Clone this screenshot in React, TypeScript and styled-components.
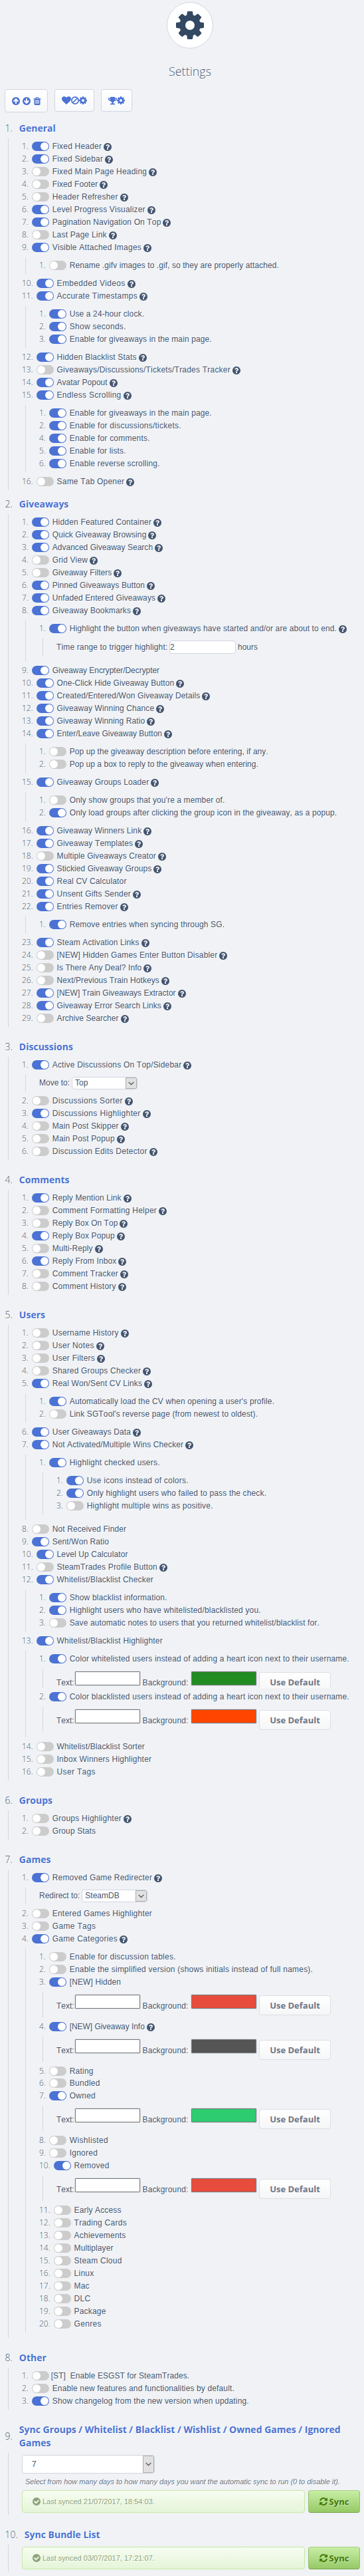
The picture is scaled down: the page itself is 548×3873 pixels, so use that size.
import React from "react";
import styled, { createGlobalStyle, css } from "styled-components";
import { FaTrophy } from "react-icons/fa";

const GlobalStyle = createGlobalStyle`
  body {
    margin: 0;
    background: #f0f2f5;
    color: #465670;
    font: 12px/14px "Liberation Sans", Arial, sans-serif;
    text-shadow: 1px 1px rgba(255, 255, 255, 0.94);
  }
  * { box-sizing: border-box; }
`;

const DISC =
  "M1664 896q0 209-103 385.500t-279.500 279.500-385.500 103-385.500-103-279.500-279.500-103-385.500 103-385.500 279.500-279.500 385.500-103 385.500 103 279.500 279.500 103 385.500z";
const PATHS = {
  cog: "M1152 896q0-106-75-181t-181-75-181 75-75 181 75 181 181 75 181-75 75-181zm512-109v222q0 12-8 23t-20 13l-185 28q-19 54-39 91 35 50 107 138 10 12 10 25t-9 23q-27 37-99 108t-94 71q-12 0-26-9l-138-108q-44 23-91 38-16 136-29 186-7 28-36 28h-222q-14 0-24.500-8.500t-11.500-21.500l-28-184q-49-16-90-37l-141 107q-10 9-25 9-14 0-25-11-126-114-165-168-7-10-7-23 0-12 8-23 15-21 51-66.500t54-70.500q-27-50-41-99l-183-27q-13-2-21-12.500t-8-23.500v-222q0-12 8-23t19-13l186-28q14-46 39-92-40-57-107-138-10-12-10-24 0-10 9-23 26-36 98.500-107.500t94.500-71.500q13 0 26 10l138 107q44-23 91-38 16-136 29-186 7-28 36-28h222q14 0 24.500 8.500t11.500 21.500l28 184q49 16 90 37l142-107q9-9 24-9 13 0 25 10 129 119 165 170 7 8 7 22 0 12-8 23-15 21-51 66.500t-54 70.500q26 50 41 98l183 28q13 2 21 12.500t8 23.500z",
  help: "M1024 1376v-192q0-14-9-23t-23-9h-192q-14 0-23 9t-9 23v192q0 14 9 23t23 9h192q14 0 23-9t9-23zm256-672q0-88-55.500-163t-138.500-116-170-41q-243 0-371 213-15 24 8 42l132 100q7 6 19 6 16 0 25-12 53-68 86-92 34-24 86-24 48 0 85.500 26t37.500 59q0 38-20 61t-68 45q-63 28-115.500 86.500t-52.500 125.500v36q0 14 9 23t23 9h192q14 0 23-9t9-23q0-19 21.500-49.500t54.500-49.500q32-18 49-28.500t46-35 44.500-48 28-60.500 12.500-81z" + DISC,
  up: "M1412 895q0-27-18-45l-362-362-91-91q-18-18-45-18t-45 18l-91 91-362 362q-18 18-18 45t18 45l91 91q18 18 45 18t45-18l189-189v502q0 26 19 45t45 19h128q26 0 45-19t19-45v-502l189 189q19 19 45 19t45-19l91-91q18-18 18-45z" + DISC,
  trash: "M704 1376v-704q0-14-9-23t-23-9h-64q-14 0-23 9t-9 23v704q0 14 9 23t23 9h64q14 0 23-9t9-23zm256 0v-704q0-14-9-23t-23-9h-64q-14 0-23 9t-9 23v704q0 14 9 23t23 9h64q14 0 23-9t9-23zm256 0v-704q0-14-9-23t-23-9h-64q-14 0-23 9t-9 23v704q0 14 9 23t23 9h64q14 0 23-9t9-23zm-544-992h448l-48-117q-7-9-17-11h-317q-10 2-17 11zm928 32v64q0 14-9 23t-23 9h-96v948q0 83-47 143.500t-113 60.500h-832q-66 0-113-58.500t-47-141.500v-952h-96q-14 0-23-9t-9-23v-64q0-14 9-23t23-9h309l70-167q15-37 54-63t79-26h320q40 0 79 26t54 63l70 167h309q14 0 23 9t9 23z",
  heart: "M896 1664q-26 0-44-18l-624-602q-10-8-27.500-26t-55.500-65.500-68-97.500-53.500-121-23.500-138q0-220 127-344t351-124q62 0 126.500 21.500t120 58 95.500 68.500 76 68q36-36 76-68t95.500-68.500 120-58 126.500-21.500q224 0 351 124t127 344q0 221-229 450l-623 600q-18 18-44 18z",
  refresh: "M1639 1056q0 5-1 7-64 268-268 434.500t-478 166.500q-146 0-282.500-55t-243.500-157l-129 129q-19 19-45 19t-45-19-19-45v-448q0-26 19-45t45-19h448q26 0 45 19t19 45-19 45l-137 137q71 66 161 102t187 36q134 0 250-65t186-179q11-17 53-117 8-23 30-23h192q13 0 22.500 9.500t9.500 22.500zm25-800v448q0 26-19 45t-45 19h-448q-26 0-45-19t-19-45 19-45l138-138q-148-137-349-137-134 0-250 65t-186 179q-11 17-53 117-8 23-30 23h-199q-13 0-22.500-9.500t-9.500-22.500v-7q65-268 270-434.500t480-166.500q146 0 284 55.500t245 156.500l130-129q19-19 45-19t45 19 19 45z",
  check: "M1412 734q0-28-18-46l-91-90q-19-19-45-19t-45 19l-408 407-226-226q-19-19-45-19t-45 19l-91 90q-18 18-18 46 0 27 18 45l362 362q19 19 45 19 27 0 46-19l543-543q18-18 18-45z" + DISC,
};

const Svg = styled.svg<{ $size: number; $flip?: boolean }>`
  display: block;
  flex: none;
  width: ${(p) => p.$size}px;
  height: ${(p) => p.$size}px;
  fill: currentColor;
  fill-rule: evenodd;
  ${(p) => p.$flip && css`transform: rotate(180deg);`}
`;

const Icon = ({ name, size = 12, flip, full }: { name: keyof typeof PATHS; size?: number; flip?: boolean; full?: boolean }) => (
  <Svg $size={size} $flip={flip} viewBox={full ? "0 0 1792 1792" : "128 128 1536 1536"}>
    <path d={PATHS[name]} />
  </Svg>
);

const BanIcon = () => (
  <Svg $size={12} viewBox="0 0 12 12">
    <circle cx="6" cy="6" r="5.1" fill="none" stroke="currentColor" strokeWidth="1.7" />
    <path d="M9.5 2.500L2.500 9.500" stroke="currentColor" strokeWidth="1.700" />
  </Svg>
);

const Page = styled.main`
  width: 548px;
  height: 3873px;
  padding: 3px 0 0 7px;
  overflow: hidden;
`;

const Header = styled.header`
  display: flex;
  flex-direction: column;
  align-items: center;
  padding-left: 17px;
`;

const Badge = styled.div`
  display: flex;
  align-items: center;
  justify-content: center;
  width: 70px;
  height: 70px;
  border: 1px solid #d2d6e0;
  border-radius: 50%;
  background: #fff;
  color: #334862;
`;

const Title = styled.h1`
  margin: 22px 0 15px;
  color: #4d5d74;
  font: 300 18px/24px "Open Sans", sans-serif;
`;

const Toolbar = styled.div`
  display: flex;
  align-items: flex-start;
  gap: 10px;
  height: 35px;
  margin-bottom: 14px;
`;

const ToolButton = styled.button<{ $width: number; $tall?: boolean }>`
  display: flex;
  align-items: center;
  justify-content: center;
  gap: ${(p) => (p.$tall ? "4px" : "0")};
  width: ${(p) => p.$width}px;
  height: ${(p) => (p.$tall ? 35 : 34)}px;
  padding: 0;
  border: 1px solid #d2d6e0;
  border-radius: 4px;
  background: linear-gradient(#fff, #f7f8fa);
  color: #4b72d4;
`;

const Section = styled.section<{ $gap: number }>`
  margin-top: ${(p) => p.$gap}px;
`;

const Heading = styled.div`
  display: flex;
  align-items: center;
  gap: 10px;
  margin-bottom: 5px;
  padding-left: 0.5px;
  color: #4d5d74;
  font: 300 14px/20px "Open Sans", sans-serif;
`;

const HeadingText = styled.h2`
  flex: 1;
  margin: 0;
  color: #4b72d4;
  font-size: 14px;
  font-weight: 700;
`;

const Group = styled.div<{ $nested?: boolean }>`
  margin: ${(p) => (p.$nested ? "8px 0 7px 5px" : "0 0 0 5px")};
  padding: 5px 0 1px 20px;
  border-left: 1px solid #d2d6e0;
`;

const Panel = styled.div<{ $height: number; $cut?: boolean }>`
  display: flex;
  align-items: flex-start;
  height: ${(p) => p.$height}px;
  margin: ${(p) => (p.$cut ? "8px 0 6px 5px" : "8px 0 7px 5px")};
  padding: 3px 0 0 20px;
  border-left: 1px solid #d2d6e0;
  white-space: pre;
  overflow: hidden;
`;

const Row = styled.div<{ $tight?: boolean }>`
  display: flex;
  align-items: center;
  height: 14px;
  margin-bottom: ${(p) => (p.$tight ? 4 : 5)}px;
  white-space: nowrap;
`;

const Num = styled.span`
  margin-right: 5px;
  color: #465670;
  font: 300 12px/14px "Open Sans", sans-serif;
`;

const Track = styled.span<{ $on: boolean }>`
  display: flex;
  flex: none;
  justify-content: ${(p) => (p.$on ? "flex-end" : "flex-start")};
  width: 26px;
  height: 14px;
  padding: 1px;
  border-radius: 7px;
  background: ${(p) => (p.$on ? "#4b72d4" : "#ccc")};
`;

const Knob = styled.span`
  width: 12px;
  height: 12px;
  border-radius: 50%;
  background: #fff;
`;

const Label = styled.span<{ $close?: boolean }>`
  margin: 0 3px 0 ${(p) => (p.$close ? 3 : 5)}px;
  font-kerning: none;
  white-space: pre;
`;

const HelpWrap = styled.span`
  padding-top: 2px;
`;

const Caption = styled.span<{ $top: number; $width?: number }>`
  flex: none;
  width: ${(p) => (p.$width ? p.$width + "px" : "auto")};
  margin-top: ${(p) => p.$top}px;
  font-kerning: none;
`;

const NumberBox = styled.span`
  width: 100px;
  height: 20px;
  margin: 0 3px;
  border: 1px solid #d2d6e0;
  border-radius: 4px;
  background: #fff;
  line-height: 18px;
`;

const Select = styled.span<{ $big?: boolean }>`
  display: flex;
  justify-content: space-between;
  width: ${(p) => (p.$big ? 200 : 99)}px;
  height: ${(p) => (p.$big ? 28 : 19)}px;
  margin-left: ${(p) => (p.$big ? 0 : 3)}px;
  padding-left: ${(p) => (p.$big ? 14 : 4)}px;
  border: 1px solid #d2d6e0;
  border-radius: 4px;
  background: #fff;
  line-height: ${(p) => (p.$big ? 26 : 17)}px;
  overflow: hidden;
`;

const Arrow = styled.span`
  display: flex;
  align-items: center;
  justify-content: center;
  width: 17px;
  border: 1px solid #adadad;
  background: #e1e1e1;
`;

const Swatch = styled.span<{ $color: string }>`
  flex: none;
  width: 98px;
  height: 21px;
  margin-top: 1px;
  border: 1px solid #7a7a7a;
  border-radius: 1px;
  background: ${(p) => p.$color};
  box-shadow: 0 0 0 0.5px #c8cedb;
`;

const DefaultButton = styled.button`
  flex: none;
  width: 108px;
  height: 30px;
  margin: 2px 0 0 4px;
  padding: 0;
  border: 1px solid #dcdfe4;
  border-radius: 4px;
  background: linear-gradient(#fff, #f5f6f7);
  color: #6f7687;
  font: 700 13px/28px "Open Sans", sans-serif;
`;

const SyncPanel = styled.div`
  margin-left: 5px;
  padding: 3px 0 3px 20px;
  border-left: 1px solid #d2d6e0;
`;

const Description = styled.p`
  margin: 6px 0 7px 5px;
  color: #6b7a8c;
  font: italic 11px/12px "Liberation Sans", Arial, sans-serif;
  letter-spacing: -0.045px;
  white-space: nowrap;
`;

const SyncRow = styled.div`
  display: flex;
  gap: 5px;
`;

const Status = styled.div`
  display: flex;
  align-items: center;
  gap: 3px;
  width: 426px;
  height: 34px;
  padding: 0 0 1px 15px;
  border: 1px solid #c5e8a5;
  border-radius: 4px;
  background: linear-gradient(#f7fcf1, #e4f5d8);
  color: #8da37e;
  font-size: 11px;
`;

const SyncButton = styled.button`
  display: flex;
  align-items: center;
  justify-content: center;
  gap: 3px;
  width: 78px;
  height: 34px;
  padding: 0;
  border: 1px solid;
  border-color: #a8ce84 #96be70 #76a34c;
  border-radius: 4px;
  background: linear-gradient(#c8eea5, #96c966);
  color: #437808;
  font: 700 13px/18px "Open Sans", sans-serif;
  text-shadow: 1px 1px 1px rgba(255, 255, 255, 0.4);
`;

/* Difference between whole-pixel and fractional glyph advances at 12px. */
const advanceDelta = (char: string) => {
  if ("abdeghnopquilwCDHLNRU".includes(char)) return 0.33;
  if ("tf ./,:[]()".includes(char)) return -0.33;
  if ("sm".includes(char)) return 1;
  if ("vyz".includes(char)) return -1;
  return 0;
};

const tracking = (text: string) => ({
  letterSpacing: `${([...text].reduce((sum, char) => sum + advanceDelta(char), 0) / text.length).toFixed(3)}px`,
});

type Extra =
  | { kind: "list"; items: Item[] }
  | { kind: "hours" }
  | { kind: "select"; caption: string; value: string }
  | { kind: "colors"; background: string; cut?: boolean };

type Item = { n: number; on: boolean; text: string; help: boolean; extra?: Extra; tight?: boolean; close?: boolean };

/* Flags: "+" switched on, "-" switched off, "?" followed by a help icon. */
const it = (n: number, flags: string, text: string, extra?: Extra): Item => ({
  n,
  on: flags[0] === "+",
  help: flags.includes("?"),
  text,
  extra,
});
const list = (...items: Item[]): Extra => ({ kind: "list", items });
const colors = (background: string, cut?: boolean): Extra => ({ kind: "colors", background, cut });

const general: Item[] = [
  it(1, "+?", "Fixed Header"),
  it(2, "+?", "Fixed Sidebar"),
  it(3, "-?", "Fixed Main Page Heading"),
  it(4, "-?", "Fixed Footer"),
  it(5, "-?", "Header Refresher"),
  it(6, "+?", "Level Progress Visualizer"),
  it(7, "+?", "Pagination Navigation On Top"),
  it(8, "-?", "Last Page Link"),
  it(9, "+?", "Visible Attached Images", list(it(1, "-", "Rename .gifv images to .gif, so they are properly attached."))),
  it(10, "+?", "Embedded Videos"),
  it(11, "+?", "Accurate Timestamps", list(
    it(1, "+", "Use a 24-hour clock."),
    it(2, "+", "Show seconds."),
    it(3, "+", "Enable for giveaways in the main page."),
  )),
  it(12, "+?", "Hidden Blacklist Stats"),
  it(13, "-?", "Giveaways/Discussions/Tickets/Trades Tracker"),
  it(14, "+?", "Avatar Popout"),
  it(15, "+?", "Endless Scrolling", list(
    it(1, "+", "Enable for giveaways in the main page."),
    it(2, "+", "Enable for discussions/tickets."),
    it(4, "+", "Enable for comments."),
    it(5, "+", "Enable for lists."),
    it(6, "+", "Enable reverse scrolling."),
  )),
  it(16, "-?", "Same Tab Opener"),
];

const giveaways: Item[] = [
  it(1, "+?", "Hidden Featured Container"),
  it(2, "+?", "Quick Giveaway Browsing"),
  it(3, "+?", "Advanced Giveaway Search"),
  it(4, "-?", "Grid View"),
  it(5, "-?", "Giveaway Filters"),
  it(6, "+?", "Pinned Giveaways Button"),
  it(7, "+?", "Unfaded Entered Giveaways"),
  it(8, "+?", "Giveaway Bookmarks", list(
    it(1, "+?", "Highlight the button when giveaways have started and/or are about to end.", { kind: "hours" }),
  )),
  it(9, "+", "Giveaway Encrypter/Decrypter"),
  it(10, "+?", "One-Click Hide Giveaway Button"),
  it(11, "+?", "Created/Entered/Won Giveaway Details"),
  it(12, "+?", "Giveaway Winning Chance"),
  it(13, "+?", "Giveaway Winning Ratio"),
  it(14, "+?", "Enter/Leave Giveaway Button", list(
    it(1, "-", "Pop up the giveaway description before entering, if any."),
    it(2, "-", "Pop up a box to reply to the giveaway when entering."),
  )),
  it(15, "+?", "Giveaway Groups Loader", list(
    it(1, "-", "Only show groups that you're a member of."),
    it(2, "+", "Only load groups after clicking the group icon in the giveaway, as a popup."),
  )),
  it(16, "+?", "Giveaway Winners Link"),
  it(17, "+?", "Giveaway Templates"),
  it(18, "-?", "Multiple Giveaways Creator"),
  it(19, "+?", "Stickied Giveaway Groups"),
  it(20, "+", "Real CV Calculator"),
  it(21, "+?", "Unsent Gifts Sender"),
  it(22, "+?", "Entries Remover", list(it(1, "+", "Remove entries when syncing through SG."))),
  it(23, "+?", "Steam Activation Links"),
  it(24, "-?", "[NEW] Hidden Games Enter Button Disabler"),
  it(25, "-?", "Is There Any Deal? Info"),
  it(26, "-?", "Next/Previous Train Hotkeys"),
  it(27, "+?", "[NEW] Train Giveaways Extractor"),
  it(28, "+?", "Giveaway Error Search Links"),
  it(29, "-?", "Archive Searcher"),
];

const discussions: Item[] = [
  it(1, "+?", "Active Discussions On Top/Sidebar", { kind: "select", caption: "Move to:", value: "Top" }),
  it(2, "-?", "Discussions Sorter"),
  it(3, "+?", "Discussions Highlighter"),
  it(4, "-?", "Main Post Skipper"),
  it(5, "-?", "Main Post Popup"),
  it(6, "-?", "Discussion Edits Detector"),
];

const comments: Item[] = [
  it(1, "+?", "Reply Mention Link"),
  it(2, "-?", "Comment Formatting Helper"),
  it(3, "-?", "Reply Box On Top"),
  it(4, "+?", "Reply Box Popup"),
  it(5, "-?", "Multi-Reply"),
  it(6, "+?", "Reply From Inbox"),
  it(7, "-?", "Comment Tracker"),
  it(8, "-?", "Comment History"),
];

const users: Item[] = [
  it(1, "-?", "Username History"),
  it(2, "-?", "User Notes"),
  it(3, "-?", "User Filters"),
  it(4, "-?", "Shared Groups Checker"),
  it(5, "+?", "Real Won/Sent CV Links", list(
    it(1, "+", "Automatically load the CV when opening a user's profile."),
    it(2, "-", "Link SGTool's reverse page (from newest to oldest)."),
  )),
  it(6, "+?", "User Giveaways Data"),
  it(7, "+?", "Not Activated/Multiple Wins Checker", list(
    it(1, "+", "Highlight checked users.", list(
      it(1, "+", "Use icons instead of colors."),
      it(2, "+", "Only highlight users who failed to pass the check."),
      it(3, "-", "Highlight multiple wins as positive."),
    )),
  )),
  it(8, "-", "Not Received Finder"),
  it(9, "+", "Sent/Won Ratio"),
  it(10, "+", "Level Up Calculator"),
  it(11, "-?", "SteamTrades Profile Button"),
  it(12, "+", "Whitelist/Blacklist Checker", list(
    it(1, "+", "Show blacklist information."),
    it(2, "+", "Highlight users who have whitelisted/blacklisted you."),
    it(3, "-", "Save automatic notes to users that you returned whitelist/blacklist for."),
  )),
  it(13, "+", "Whitelist/Blacklist Highlighter", list(
    it(1, "+", "Color whitelisted users instead of adding a heart icon next to their username.", colors("#228b22", true)),
    it(2, "+", "Color blacklisted users instead of adding a heart icon next to their username.", colors("#ff4500")),
  )),
  it(14, "-", "Whitelist/Blacklist Sorter"),
  it(15, "-", "Inbox Winners Highlighter"),
  it(16, "-", "User Tags"),
];

const groups: Item[] = [it(1, "-?", "Groups Highlighter"), it(2, "-", "Group Stats")];

const games: Item[] = [
  it(1, "+?", "Removed Game Redirecter", { kind: "select", caption: "Redirect to:", value: "SteamDB" }),
  it(2, "-", "Entered Games Highlighter"),
  it(3, "-", "Game Tags"),
  it(4, "+?", "Game Categories", list(
    it(1, "-", "Enable for discussion tables."),
    it(2, "-", "Enable the simplified version (shows initials instead of full names)."),
    it(3, "+", "[NEW] Hidden", colors("#e74c3c")),
    it(4, "+?", "[NEW] Giveaway Info", colors("#555555")),
    { ...it(5, "-", "Rating"), tight: true },
    it(6, "-", "Bundled"),
    it(7, "+", "Owned", colors("#2ecc71")),
    it(8, "-", "Wishlisted"),
    it(9, "-", "Ignored"),
    it(10, "+", "Removed", colors("#e74c3c")),
    it(11, "-", "Early Access"),
    it(12, "-", "Trading Cards"),
    it(13, "-", "Achievements"),
    it(14, "-", "Multiplayer"),
    it(15, "-", "Steam Cloud"),
    it(16, "-", "Linux"),
    it(17, "-", "Mac"),
    it(18, "-", "DLC"),
    it(19, "-", "Package"),
    it(20, "-", "Genres"),
  )),
];

const other: Item[] = [
  { ...it(1, "-", "[ST]  Enable ESGST for SteamTrades."), close: true },
  it(2, "-", "Enable new features and functionalities by default."),
  it(3, "+", "Show changelog from the new version when updating."),
];

const Dropdown = ({ value, big }: { value: string; big?: boolean }) => (
  <Select $big={big}>
    {value}
    <Arrow>
      <svg width="9" height="6" viewBox="0 0 9 6">
        <path d="M0.700 0.800L4.500 4.600L8.300 0.800" fill="none" stroke="#444" strokeWidth="1.200" />
      </svg>
    </Arrow>
  </Select>
);

const ExtraView = ({ extra }: { extra: Extra }) => {
  switch (extra.kind) {
    case "list":
      return (
        <Group $nested>
          <Items items={extra.items} />
        </Group>
      );
    case "hours":
      return (
        <Panel $height={26}>
          <Caption $top={3} $width={167} style={tracking("Time range to trigger highlight:")}>
            Time range to trigger highlight:
          </Caption>
          <NumberBox>2</NumberBox>
          <Caption $top={3}>hours</Caption>
        </Panel>
      );
    case "select":
      return (
        <Panel $height={25}>
          <Caption $top={2}>{extra.caption}</Caption>
          <Dropdown value={extra.value} />
        </Panel>
      );
    case "colors":
      return (
        <Panel $height={extra.cut ? 29 : 38} $cut={extra.cut}>
          <Caption $top={11} $width={28}>Text:</Caption>
          <Swatch $color="#fff" />
          <Caption $top={11} $width={77} style={tracking("Background:")}>
            {" Background:"}
          </Caption>
          <Swatch $color={extra.background} />
          <DefaultButton>Use Default</DefaultButton>
        </Panel>
      );
  }
};

function Items({ items }: { items: Item[] }) {
  return (
    <>
      {items.map((item) => (
        <React.Fragment key={item.n}>
          <Row $tight={item.tight}>
            <Num>{item.n}.</Num>
            <Track $on={item.on}>
              <Knob />
            </Track>
            <Label $close={item.close} style={tracking(item.text)}>
              {item.text}
            </Label>
            {item.help && (
              <HelpWrap>
                <Icon name="help" />
              </HelpWrap>
            )}
          </Row>
          {item.extra && <ExtraView extra={item.extra} />}
        </React.Fragment>
      ))}
    </>
  );
}

const Block = ({ n, title, gap = 20, children }: { n: number; title: string; gap?: number; children: React.ReactNode }) => (
  <Section $gap={gap}>
    <Heading>
      <span>{n}.</span>
      <HeadingText>{title}</HeadingText>
    </Heading>
    {children}
  </Section>
);

const SyncStatus = ({ date }: { date: string }) => (
  <SyncRow>
    <Status>
      <Icon name="check" />
      <span>Last synced {date}.</span>
    </Status>
    <SyncButton>
      <Icon name="refresh" />
      Sync
    </SyncButton>
  </SyncRow>
);

const lists = [
  { title: "General", items: general, gap: 0 },
  { title: "Giveaways", items: giveaways, gap: 11 },
  { title: "Discussions", items: discussions },
  { title: "Comments", items: comments },
  { title: "Users", items: users },
  { title: "Groups", items: groups },
  { title: "Games", items: games },
  { title: "Other", items: other },
];

export default function App() {
  return (
    <>
      <GlobalStyle />
      <Page>
        <Header>
          <Badge>
            <Icon name="cog" size={42} />
          </Badge>
          <Title>Settings</Title>
        </Header>
        <Toolbar>
          <ToolButton $width={65} $tall>
            <Icon name="up" />
            <Icon name="up" flip />
            <Icon name="trash" />
          </ToolButton>
          <ToolButton $width={60}>
            <Icon name="heart" size={14} full />
            <BanIcon />
            <Icon name="cog" />
          </ToolButton>
          <ToolButton $width={47}>
            <FaTrophy size={13} />
            <Icon name="cog" />
          </ToolButton>
        </Toolbar>
        {lists.map((section, index) => (
          <Block key={section.title} n={index + 1} title={section.title} gap={section.gap}>
            <Group>
              <Items items={section.items} />
            </Group>
          </Block>
        ))}
        <Block n={9} title="Sync Groups / Whitelist / Blacklist / Wishlist / Owned Games / Ignored Games">
          <SyncPanel>
            <Dropdown value="7" big />
            <Description>Select from how many days to how many days you want the automatic sync to run (0 to disable it).</Description>
            <SyncStatus date="21/07/2017, 18:54:03" />
          </SyncPanel>
        </Block>
        <Block n={10} title="Sync Bundle List">
          <SyncPanel>
            <SyncStatus date="03/07/2017, 17:21:07" />
          </SyncPanel>
        </Block>
      </Page>
    </>
  );
}
